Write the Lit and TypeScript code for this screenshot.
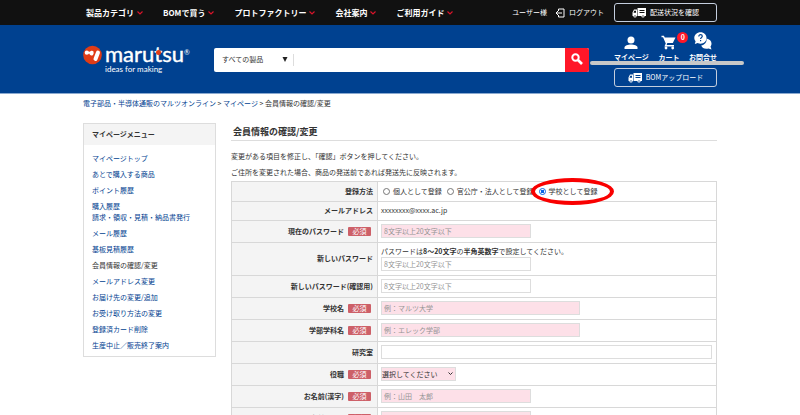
import { LitElement, html, css, svg, nothing } from "lit";
import { customElement } from "lit/decorators.js";
import { classMap } from "lit/directives/class-map.js";

type Field = {
  id: string;
  label: string;
  required?: boolean;
  placeholder?: string;
  size?: "short" | "medium" | "full";
  type?: string;
};

const NAV = ["製品カテゴリ", "BOMで買う", "プロトファクトリー", "会社案内", "ご利用ガイド"];

const MENU: string[][] = [
  ["マイページトップ"],
  ["あとで購入する商品"],
  ["ポイント履歴"],
  ["購入履歴", "請求・領収・見積・納品書発行"],
  ["メール履歴"],
  ["基板見積履歴"],
  ["会員情報の確認/変更"],
  ["メールアドレス変更"],
  ["お届け先の変更/追加"],
  ["お受け取り方法の変更"],
  ["登録済カード削除"],
  ["生産中止／販売終了案内"],
];
const CURRENT = "会員情報の確認/変更";

const truck = svg`
  <path fill="#fff" d="M5.500 0H14v8H5.500zM2 1.500h3V8H.5V4.500z"/>
  <path fill="currentColor" d="M7.500 2h5v1h-5zM7.500 4h5v1h-5zM2.300 2.700H4v2H1.500z"/>
  <circle cx="3" cy="8" r="1.600" fill="#fff"/><circle cx="11" cy="8" r="1.600" fill="#fff"/>
  <circle cx="3" cy="8" r=".7" fill="currentColor"/><circle cx="11" cy="8" r=".7" fill="currentColor"/>`;

const base = css`
  * { box-sizing: border-box; }
  a { text-decoration: none; color: inherit; }
  button, input, select { font: inherit; margin: 0; }
  svg { display: block; flex: none; }
  .wrap { max-width: 634px; margin: 0 auto; }
`;

@customElement("site-header")
class SiteHeader extends LitElement {
  static styles = [base, css`
    :host { display: block; color: #fff; }
    .top { background: #111; }
    .top .wrap { display: flex; align-items: center; height: 25px; padding-left: 3px; }
    nav { display: flex; gap: 20px; font-size: 8px; font-weight: 700; line-height: 12px; flex: 1; }
    nav a { display: flex; align-items: center; gap: 3px; white-space: nowrap; }
    .user { display: flex; align-items: center; gap: 8px; margin-right: 10px; white-space: nowrap; }
    .logout { display: flex; align-items: center; gap: 4px; }
    .pill {
      display: flex; align-items: center; justify-content: center; gap: 4px;
      width: 103px; height: 19px; padding: 0;
      border: 1px solid #c4cede; border-radius: 3px;
      background: transparent; color: #fff; font-size: 7px; line-height: 11px; white-space: nowrap;
    }
    .dark svg { color: #111; }
    .blue svg { color: #004190; }
    .main { background: #004190; border-bottom: 1px solid #8aa9d0; }
    .main .wrap { display: flex; align-items: center; padding: 7px 0 6px; }
    .logo { display: flex; width: 131px; gap: 3px; }
    .brand { display: grid; justify-items: start; }
    .name { position: relative; font: 400 22px/18px Lato, sans-serif; -webkit-text-stroke: 0.4px #fff; }
    .dot { position: absolute; left: 51px; top: 5px; width: 5px; height: 5px; border-radius: 50%; background: #e03c16; }
    .reg { position: absolute; left: 100%; top: 4px; font-size: 7px; line-height: 7px; -webkit-text-stroke: 0; }
    .tag { margin-top: 1px; font: 400 8px/10px Lato, sans-serif; }
    .search { display: flex; flex: 1; height: 24px; margin-right: 25px; border-radius: 2px; overflow: hidden; background: #fff; }
    .cat { position: relative; display: flex; align-items: center; width: 80px; border-right: 1px solid #ddd; margin: 6px 0; }
    .cat select { appearance: none; width: 100%; border: 0; background: none; padding: 0 0 0 8px; font-size: 7px; color: #333; }
    .cat svg { position: absolute; right: 5px; pointer-events: none; }
    .search input { flex: 1; min-width: 0; border: 0; padding: 0 6px; }
    .go { width: 24px; border: 0; padding: 0 0 2px; background: #ff1728; display: grid; place-items: center; }
    .side { position: relative; width: 103px; }
    .icons { display: flex; justify-content: space-between; margin-bottom: 4px; }
    .icons a { position: relative; display: grid; justify-items: center; font-size: 7px; font-weight: 700; line-height: 11px; white-space: nowrap; }
    .glyph { display: flex; align-items: flex-end; height: 18px; margin-bottom: 2px; }
    .icons a { padding-bottom: 1px; }
    .count { position: absolute; left: 19px; top: 0; width: 11px; height: 11px; border-radius: 50%; background: #ff1728; text-align: center; }
    .strike { position: absolute; left: -24px; right: -27px; top: 29px; height: 4px; border-radius: 2px; background: #c8c8c8; }
  `];

  render() {
    return html`
      <div class="top"><div class="wrap">
        <nav>${NAV.map((n) => html`<a href="#">${n}<svg width="6" height="4" viewBox="0 0 6 4"><path d="M.5.5 3 3 5.5.5" fill="none" stroke="#d8142a" stroke-width="1.2"/></svg></a>`)}</nav>
        <div class="user">
          <span>ユーザー様</span>
          <a class="logout" href="#"><svg width="10" height="10" viewBox="0 0 10 10"><path d="M3.500 3V1h5.500v8H3.500V7M7 5H1M3 3 1 5l2 2" fill="none" stroke="#fff" stroke-width="1"/></svg>ログアウト</a>
        </div>
        <button class="pill dark"><svg width="14" height="10" viewBox="0 0 14 10">${truck}</svg>配送状況を確認</button>
      </div></div>
      <header class="main"><div class="wrap">
        <a class="logo" href="#">
          <svg width="19" height="20" viewBox="0 0 19 20">
            <circle cx="9.500" cy="10" r="9.300" fill="#e03c16"/>
            <circle cx="3.800" cy="7.700" r="2.100" fill="#fff"/>
            <path d="M8.700 7.700 8.500 8.500M15 7.500 12.500 14" stroke="#fff" stroke-width="4" stroke-linecap="round" fill="none"/>
            <path d="M3.800 7.700h4" stroke="#fff" stroke-width="2"/>
          </svg>
          <span class="brand"><span class="name">marutsu<span class="dot"></span><span class="reg">®</span></span><span class="tag">ideas for making</span></span>
        </a>
        <form class="search" @submit=${(e: Event) => e.preventDefault()}>
          <span class="cat"><select aria-label="カテゴリ"><option>すべての製品</option></select><svg width="6" height="5" viewBox="0 0 6 5"><path d="M.5 0h5L3 5z" fill="#222"/></svg></span>
          <input type="text" aria-label="検索">
          <button class="go" aria-label="検索する"><svg width="12" height="12" viewBox="0 0 12 12"><circle cx="4.500" cy="4.500" r="3.200" fill="none" stroke="#fff" stroke-width="2"/><path d="m7 7 4 4" stroke="#fff" stroke-width="2.600"/></svg></button>
        </form>
        <div class="side">
          <div class="icons">
            <a href="#"><span class="glyph"><svg width="14" height="14" viewBox="0 0 14 14"><circle cx="7" cy="4" r="3.500" fill="#fff"/><path d="M.5 13v-1.500C.5 9.500 4 8.500 7 8.500s6.500 1 6.500 3V13z" fill="#fff"/></svg></span>マイページ</a>
            <a href="#"><span class="glyph"><svg width="15" height="15" viewBox="0 0 15 15"><path d="M.5 1.500h2l3 7-1 2.300h8.500" fill="none" stroke="#fff" stroke-width="1.400"/><path d="M3 2.500h11.500l-2.700 5.500H5.200z" fill="#fff"/><circle cx="5" cy="13" r="1.400" fill="#fff"/><circle cx="11.700" cy="13" r="1.400" fill="#fff"/></svg></span>カート<span class="count">0</span></a>
            <a href="#"><span class="glyph"><svg width="18" height="18" viewBox="0 0 18 18"><path d="M12.500 6.500c3 .5 5 2.500 5 5 0 1.300-.4 2.200-1 3l1 3-3-1c-3.500 1-6.500-.5-7.300-3C10.500 13 13 10.500 12.500 6.500z" fill="#fff"/><path d="M6.500.3c3.500 0 6 2.600 6 5.700s-2.500 5.700-6 5.700c-1 0-2-.2-2.800-.6L.8 12l.8-2.800C.8 8.200.3 7.200.3 6 .3 2.900 3 .3 6.500.3z" fill="#fff"/><path d="M4.800 4.500c0-2.500 3.500-2.300 3.500-.2 0 1.200-1.700 1.200-1.700 2.700M6.600 8v1.300" fill="none" stroke="#004190" stroke-width="1.200"/></svg></span>お問合せ</a>
          </div>
          <button class="pill blue"><svg width="14" height="10" viewBox="0 0 14 10">${truck}</svg>BOMアップロード</button>
          <div class="strike"></div>
        </div>
      </div></header>`;
  }
}

@customElement("account-menu")
class AccountMenu extends LitElement {
  static styles = [base, css`
    :host { display: block; border: 1px solid #ddd; align-self: start; }
    h2 { margin: 0; padding: 0 8px; background: #f4f4f4; font-size: 7px; line-height: 21px; }
    ul { list-style: none; margin: 0; padding: 8px 8px 5px; display: grid; gap: 5px; line-height: 11px; }
    a { display: block; color: #004190; white-space: nowrap; }
    .current { color: #333; }
    span { display: block; }
  `];
  render() {
    return html`<h2>マイページメニュー</h2>
      <ul>${MENU.map((m) => html`<li><a href="#" class=${classMap({ current: m[0] === CURRENT })}>${m.map((l) => html`<span>${l}</span>`)}</a></li>`)}</ul>`;
  }
}

@customElement("member-form")
class MemberForm extends LitElement {
  static styles = [base, css`
    :host { display: block; min-width: 0; }
    h1 { margin: 0 0 7px; padding: 0 2px; font-size: 9px; line-height: 17px; border-bottom: 1px solid #ddd; }
    p { margin: 0; line-height: 16px; }
    table { width: 100%; margin-top: 1px; border-collapse: collapse; table-layout: fixed; }
    th, td { border: 1px solid #d8d8d8; padding: 3px 4px 4px; line-height: 11px; vertical-align: middle; }
    th { width: 146px; background: #f4f4f4; text-align: right; }
    th label, .radios, .radios label { display: flex; align-items: center; }
    th label { justify-content: flex-end; gap: 4px; }
    td { padding-left: 3px; }
    .badge { width: 23px; margin-right: 2px; border-radius: 1px; background: #cd6068; color: #fff; font-weight: 400; line-height: 9px; text-align: center; }
    .text { display: block; height: 14px; padding: 0 2px; border: 1px solid #ddd; background: #fff; color: #333; outline: 0; }
    .text::placeholder { color: #949494; opacity: 1; }
    .short { width: 150px; }
    .medium { width: 199px; }
    .full { width: 100%; }
    .pink { background: #fde0e8; }
    .pick { position: relative; display: block; width: 75px; }
    .pick select { appearance: none; display: block; width: 100%; height: 14px; padding: 0; border: 1px solid #ddd; border-radius: 0; color: #333; }
    .pick svg { position: absolute; right: 3px; top: 5px; pointer-events: none; }
    .radios { height: 12px; gap: 3px; white-space: nowrap; }
    .radios label { position: relative; gap: 3px; }
    .radios input {
      appearance: none; width: 7px; height: 7px; margin-left: 2px;
      border: 1px solid #767676; border-radius: 50%; background: #fff;
    }
    .radios input:checked { border-color: #0a66e8; background: radial-gradient(circle, #0a66e8 2px, #fff 2px); }
    .ring { position: absolute; left: -6px; top: -8px; width: 83px; height: 27px; border: 4px solid #f90000; border-radius: 50%; pointer-events: none; }
    .help { display: block; }
  `];

  private head(f: Field) {
    return html`<th scope="row"><label for=${f.id}>${f.label}${f.required ? html`<span class="badge">必須</span>` : nothing}</label></th>`;
  }

  private input(f: Field) {
    return html`<input id=${f.id} type=${f.type ?? "text"} class="text ${f.size ?? "short"} ${f.required ? "pink" : ""}" placeholder=${f.placeholder ?? ""}>`;
  }

  private row(f: Field, help: unknown = nothing) {
    return html`<tr>${this.head(f)}<td>${help}${this.input(f)}</td></tr>`;
  }

  render() {
    const pw = "8文字以上20文字以下";
    return html`
      <h1>会員情報の確認/変更</h1>
      <p>変更がある項目を修正し、「確認」ボタンを押してください。</p>
      <p>ご住所を変更された場合、商品の発送前であれば発送先に反映されます。</p>
      <table>
        <tr><th scope="row">登録方法</th><td><div class="radios">
          <label><input type="radio" name="kind">個人として登録</label>
          <label><input type="radio" name="kind">官公庁・法人として登録</label>
          <label><input type="radio" name="kind" checked>学校として登録<span class="ring"></span></label>
        </div></td></tr>
        <tr><th scope="row">メールアドレス</th><td>xxxxxxxx@xxxx.ac.jp</td></tr>
        ${this.row({ id: "pw", label: "現在のパスワード", required: true, placeholder: pw, type: "password" })}
        ${this.row({ id: "new", label: "新しいパスワード", placeholder: pw, type: "password" }, html`<span class="help">パスワードは<b>8～20文字</b>の<b>半角英数字</b>で設定してください。</span>`)}
        ${this.row({ id: "confirm", label: "新しいパスワード(確認用)", placeholder: pw, type: "password" })}
        ${this.row({ id: "school", label: "学校名", required: true, placeholder: "例：マルツ大学", size: "medium" })}
        ${this.row({ id: "dept", label: "学部学科名", required: true, placeholder: "例：エレック学部", size: "medium" })}
        ${this.row({ id: "lab", label: "研究室", size: "full" })}
        <tr>${this.head({ id: "role", label: "役職", required: true })}<td><span class="pick"><select id="role" class="pink"><option>選択してください</option></select><svg width="5" height="4" viewBox="0 0 5 4"><path d="M.5.5l2 2 2-2" fill="none" stroke="#333"/></svg></span></td></tr>
        ${this.row({ id: "name", label: "お名前(漢字)", required: true, placeholder: "例：山田　太郎" })}
        ${this.row({ id: "kana", label: "お名前(カナ)", required: true })}
      </table>`;
  }
}

@customElement("app-root")
class AppRoot extends LitElement {
  static styles = [base, css`
    :host { display: block; background: #fff; color: #333; font: 7px/11px "Noto Sans CJK JP", sans-serif; }
    .crumbs { padding: 4px 0 14px; }
    .crumbs a { color: #004190; }
    .cols { display: grid; grid-template-columns: 133px minmax(0, 1fr); gap: 15px; }
  `];
  render() {
    return html`
      <site-header></site-header>
      <div class="wrap">
        <div class="crumbs"><a href="#">電子部品・半導体通販のマルツオンライン</a> &gt; <a href="#">マイページ</a> &gt; 会員情報の確認/変更</div>
        <div class="cols"><account-menu></account-menu><member-form></member-form></div>
      </div>`;
  }
}
